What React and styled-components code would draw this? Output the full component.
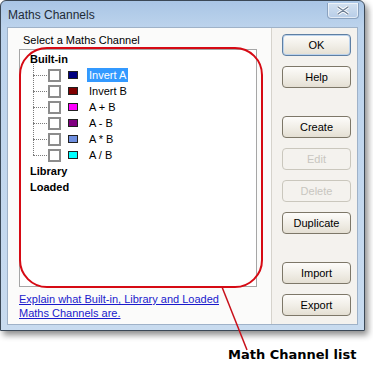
import React from 'react';
import styled, { createGlobalStyle } from 'styled-components';

const Global = createGlobalStyle`
    html, body {
        margin: 0;
        padding: 0;
        background: #ffffff;
    }
    body {
        font-family: "Liberation Sans", Arial, sans-serif;
        font-size: 11px;
        color: #000;
    }
`;

const Page = styled.div`
    position: relative;
    width: 373px;
    height: 368px;
    overflow: hidden;
`;

const Window = styled.div`
    box-sizing: border-box;
    width: 365px;
    height: 331px;
    border: 1px solid #3b4856;
    border-radius: 6px 6px 0 0;
    background: linear-gradient(#a9c5e5 0px, #bcd3ec 26px, #c8dbef 100%);
    box-shadow: 3px 4px 6px rgba(0, 0, 0, 0.45);
    display: flex;
    flex-direction: column;
`;

const TitleBar = styled.div`
    height: 26px;
    display: flex;
    align-items: center;
    justify-content: space-between;
    padding: 0 5px 0 7px;
`;

const Title = styled.div`
    font-family: "Liberation Sans", Arial, sans-serif;
    font-size: 12px;
    color: #1e2a36;
    padding-top: 1px;
`;

const CloseButton = styled.div`
    width: 30px;
    height: 15px;
    margin-top: -7px;
    border: 1px solid #8aa2bf;
    border-top: none;
    border-radius: 0 0 4px 4px;
    background: linear-gradient(#d3e1f1, #b7cde7);
    box-shadow: inset 0 0 0 1px rgba(255, 255, 255, 0.6);
    display: flex;
    align-items: center;
    justify-content: center;
`;

const Client = styled.div`
    flex: 1;
    margin: 0 6px 5px 6px;
    display: flex;
    border: 1px solid #9fb2c8;
`;

const LeftPane = styled.div`
    width: 264px;
    background: #fbfbfa;
    border-right: 1px solid #d6d3cc;
    padding: 6px 0 0 11px;
    box-sizing: border-box;
    display: flex;
    flex-direction: column;
`;

const Label = styled.div`
    padding-left: 4px;
    height: 15px;
    line-height: 13px;
`;

const ListBox = styled.div`
    width: 238px;
    height: 238px;
    box-sizing: border-box;
    border: 1px solid #a6a6a6;
    background: #ffffff;
    padding: 1px 0 0 10px;
`;

const Row = styled.div`
    height: 16px;
    display: flex;
    align-items: center;
    position: relative;
`;

const Heading = styled.span`
    font-weight: bold;
    font-size: 11px;
`;

const Branch = styled.div`
    width: 17px;
    height: 16px;
    margin-left: 1px;
    flex: none;
    position: relative;
    &::before {
        content: "";
        position: absolute;
        left: 2px;
        top: 8px;
        width: 14px;
        border-top: 1px dotted #7a7a7a;
    }
    &::after {
        content: "";
        position: absolute;
        left: 2px;
        top: ${p => (p.$first ? '-3px' : '-8px')};
        height: ${p => (p.$first ? '11px' : '16px')};
        border-left: 1px dotted #7a7a7a;
    }
`;

const CheckBox = styled.div`
    width: 13px;
    height: 13px;
    box-sizing: border-box;
    border: 2px solid #8c8c8c;
    background: #fff;
    flex: none;
`;

const Swatch = styled.div`
    width: 10px;
    height: 8px;
    box-sizing: border-box;
    margin-left: 7px;
    border: 1px solid #202020;
    background: ${p => p.$color};
    flex: none;
`;

const ItemText = styled.span`
    margin-left: 9px;
    padding: 0 2px;
    line-height: 14px;
    color: ${p => (p.$selected ? '#ffffff' : '#000')};
    background: ${p => (p.$selected ? '#3399ff' : 'transparent')};
`;

const HelpLink = styled.a`
    display: block;
    margin-top: 5px;
    line-height: 14px;
    color: #1a1acc;
    text-decoration: underline;
`;

const RightPane = styled.div`
    flex: 1;
    background: #f4f2ee;
    padding: 6px 0 0 10px;
    display: flex;
    flex-direction: column;
    gap: 28px;
`;

const ButtonGroup = styled.div`
    display: flex;
    flex-direction: column;
    gap: 10px;
`;

const Button = styled.button`
    width: 69px;
    height: 22px;
    box-sizing: border-box;
    border-radius: 4px;
    border: 1px solid ${p => (p.$default ? '#5e7fa3' : p.disabled ? '#cac7bd' : '#7d7768')};
    background: ${p => (p.disabled
        ? '#f4f2ee'
        : 'linear-gradient(#fdfcfa 0%, #efece4 60%, #e4dfd3 100%)')};
    box-shadow: ${p => (p.$default ? 'inset 0 0 0 1px #bcd3ec' : 'none')};
    font-family: "Liberation Sans", Arial, sans-serif;
    font-size: 11px;
    color: ${p => (p.disabled ? '#c8c6c0' : '#000')};
    padding: 0;
`;

const Annotation = styled.svg`
    position: absolute;
    left: 0;
    top: 0;
    pointer-events: none;
`;

const Caption = styled.div`
    position: absolute;
    left: 228px;
    top: 347px;
    font-family: "DejaVu Sans", Verdana, sans-serif;
    font-weight: bold;
    font-size: 13px;
    color: #000;
`;

const channels = [
    { name: 'Invert A', color: '#000080', selected: true },
    { name: 'Invert B', color: '#800000' },
    { name: 'A + B', color: '#ff00ff' },
    { name: 'A - B', color: '#800080' },
    { name: 'A * B', color: '#6f8fe0' },
    { name: 'A / B', color: '#00ffff' },
];

export default function App() {
    return (
        <Page>
            <Global />
            <Window>
                <TitleBar>
                    <Title>Maths Channels</Title>
                    <CloseButton>
                        <svg width="12" height="9" viewBox="0 0 12 9">
                            <path d="M1 1 L11 8 M11 1 L1 8" stroke="#ffffff" strokeWidth="3.2" strokeLinecap="round" />
                            <path d="M1 1 L11 8 M11 1 L1 8" stroke="#6d7f96" strokeWidth="1.4" strokeLinecap="round" />
                        </svg>
                    </CloseButton>
                </TitleBar>
                <Client>
                    <LeftPane>
                        <Label>Select a Maths Channel</Label>
                        <ListBox>
                            <Row><Heading>Built-in</Heading></Row>
                            {channels.map((c, i) => (
                                <Row key={c.name}>
                                    <Branch $first={i === 0} />
                                    <CheckBox />
                                    <Swatch $color={c.color} />
                                    <ItemText $selected={c.selected}>{c.name}</ItemText>
                                </Row>
                            ))}
                            <Row><Heading>Library</Heading></Row>
                            <Row><Heading>Loaded</Heading></Row>
                        </ListBox>
                        <HelpLink href="#">
                            Explain what Built-in, Library and Loaded<br />Maths Channels are.
                        </HelpLink>
                    </LeftPane>
                    <RightPane>
                        <ButtonGroup>
                            <Button $default>OK</Button>
                            <Button>Help</Button>
                        </ButtonGroup>
                        <ButtonGroup>
                            <Button>Create</Button>
                            <Button disabled>Edit</Button>
                            <Button disabled>Delete</Button>
                            <Button>Duplicate</Button>
                        </ButtonGroup>
                        <ButtonGroup>
                            <Button>Import</Button>
                            <Button>Export</Button>
                        </ButtonGroup>
                    </RightPane>
                </Client>
            </Window>
            <Annotation width="373" height="368">
                <rect x="20" y="48" width="242" height="239" rx="27" ry="27" fill="none" stroke="#d60a14" strokeWidth="2" />
                <line x1="222" y1="287" x2="247" y2="350" stroke="#c8101a" strokeWidth="1.5" />
            </Annotation>
            <Caption>Math Channel list</Caption>
        </Page>
    );
}
